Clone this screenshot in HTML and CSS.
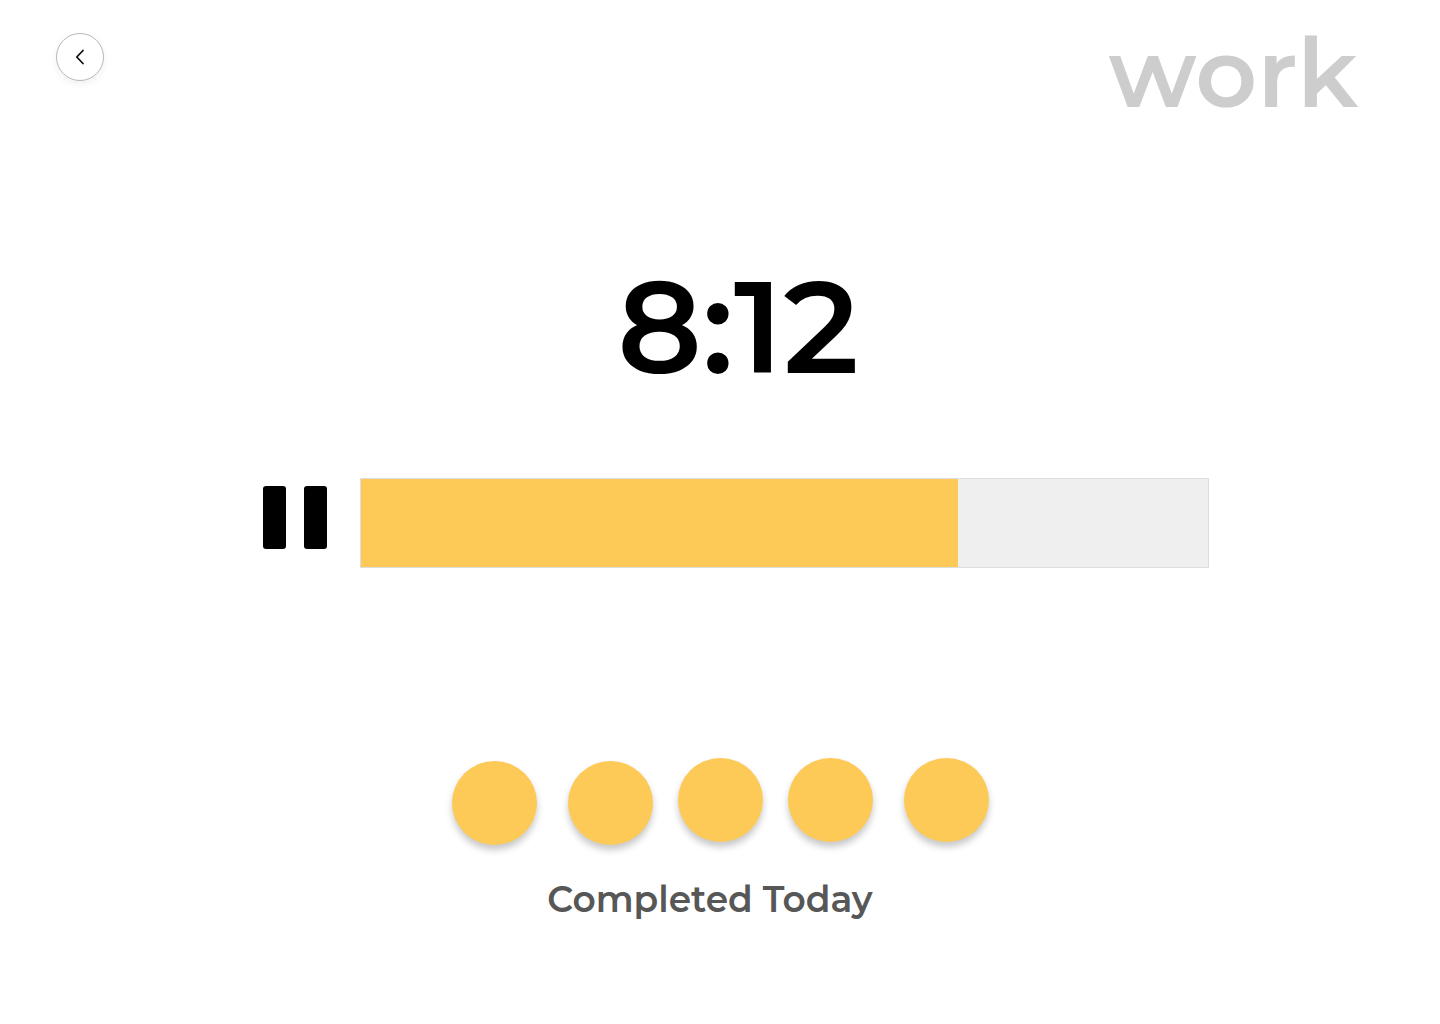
FILE: index.html
```html
<!DOCTYPE html>
<html lang="en">
<head>
<meta charset="utf-8">
<title>Work timer</title>
<link rel="stylesheet" href="styles.css">
</head>
<body>
<div class="page">
  <header class="top">
    <button class="back" aria-label="Back">
      <svg width="12" height="16" viewBox="0 0 12 16"><path d="M9 1.5 L2.8 8 L9 14.5" fill="none" stroke="#111" stroke-width="1.8" stroke-linecap="round" stroke-linejoin="round"/></svg>
    </button>
    <h1 class="mode">work</h1>
  </header>

  <div class="timer">8:12</div>

  <div class="progress-row">
    <button class="pause" aria-label="Pause">
      <span class="pause-bar"></span>
      <span class="pause-bar"></span>
    </button>
    <div class="progress">
      <div class="progress-fill" style="width: 70.5%"></div>
    </div>
  </div>

  <div class="completed">
    <div class="dots">
      <span class="dot dot-low dot-wide"></span>
      <span class="dot dot-low"></span>
      <span class="dot"></span>
      <span class="dot dot-wide-left"></span>
      <span class="dot"></span>
    </div>
    <div class="completed-label">Completed Today</div>
  </div>
</div>
</body>
</html>
```

FILE: styles.css
```css
* { box-sizing: border-box; }
html, body { margin: 0; padding: 0; background: #fff; }
body {
  font-family: "Montserrat", "Open Sans", "Liberation Sans", sans-serif;
  width: 1440px;
  height: 1024px;
  overflow: hidden;
}
.page { display: flex; flex-direction: column; }

.top {
  display: flex;
  justify-content: space-between;
  align-items: flex-start;
  padding: 33px 82px 0 56px;
  height: 140px;
}
.back {
  width: 48px;
  height: 48px;
  border-radius: 50%;
  border: 1px solid #b9b9b9;
  background: #fff;
  box-shadow: 0 3px 8px rgba(0,0,0,0.06);
  display: flex;
  align-items: center;
  justify-content: center;
  padding: 0;
  margin: 0;
}
.mode {
  margin: -8px 0 0 0;
  font-size: 96px;
  font-weight: 600;
  color: #cdcdcd;
  line-height: 1;
  letter-spacing: 0;
}

.timer {
  margin-top: 122px;
  text-align: center;
  padding-left: 36px;
  font-size: 130px;
  font-weight: 600;
  line-height: 1;
  color: #000;
  letter-spacing: 0;
}

.progress-row {
  margin-top: 86px;
  display: flex;
  align-items: flex-start;
  padding-left: 263px;
  gap: 33px;
}
.pause {
  display: flex;
  gap: 18px;
  background: none;
  border: 0;
  padding: 0;
  margin: 8px 0 0 0;
}
.pause-bar {
  width: 23px;
  height: 63px;
  background: #000;
  border-radius: 3px;
}
.progress {
  width: 849px;
  height: 90px;
  border: 1px solid #dedede;
  background: #efefef;
}
.progress-fill {
  height: 100%;
  background: #fdca58;
}

.completed {
  margin-top: 190px;
  display: flex;
  flex-direction: column;
  align-items: center;
}
.dots {
  display: flex;
  align-items: flex-start;
  gap: 25px;
  height: 90px;
}
.dot {
  width: 85px;
  height: 84px;
  border-radius: 50%;
  background: #fdca58;
  box-shadow: 0 5px 7px rgba(0,0,0,0.22);
}
.dot-low { margin-top: 3px; }
.dot-wide { margin-right: 6px; }
.dot-wide-left { margin-right: 6px; }
.completed-label {
  margin-top: 29px;
  margin-right: 20px;
  font-size: 36px;
  font-weight: 600;
  color: #575757;
}
```
